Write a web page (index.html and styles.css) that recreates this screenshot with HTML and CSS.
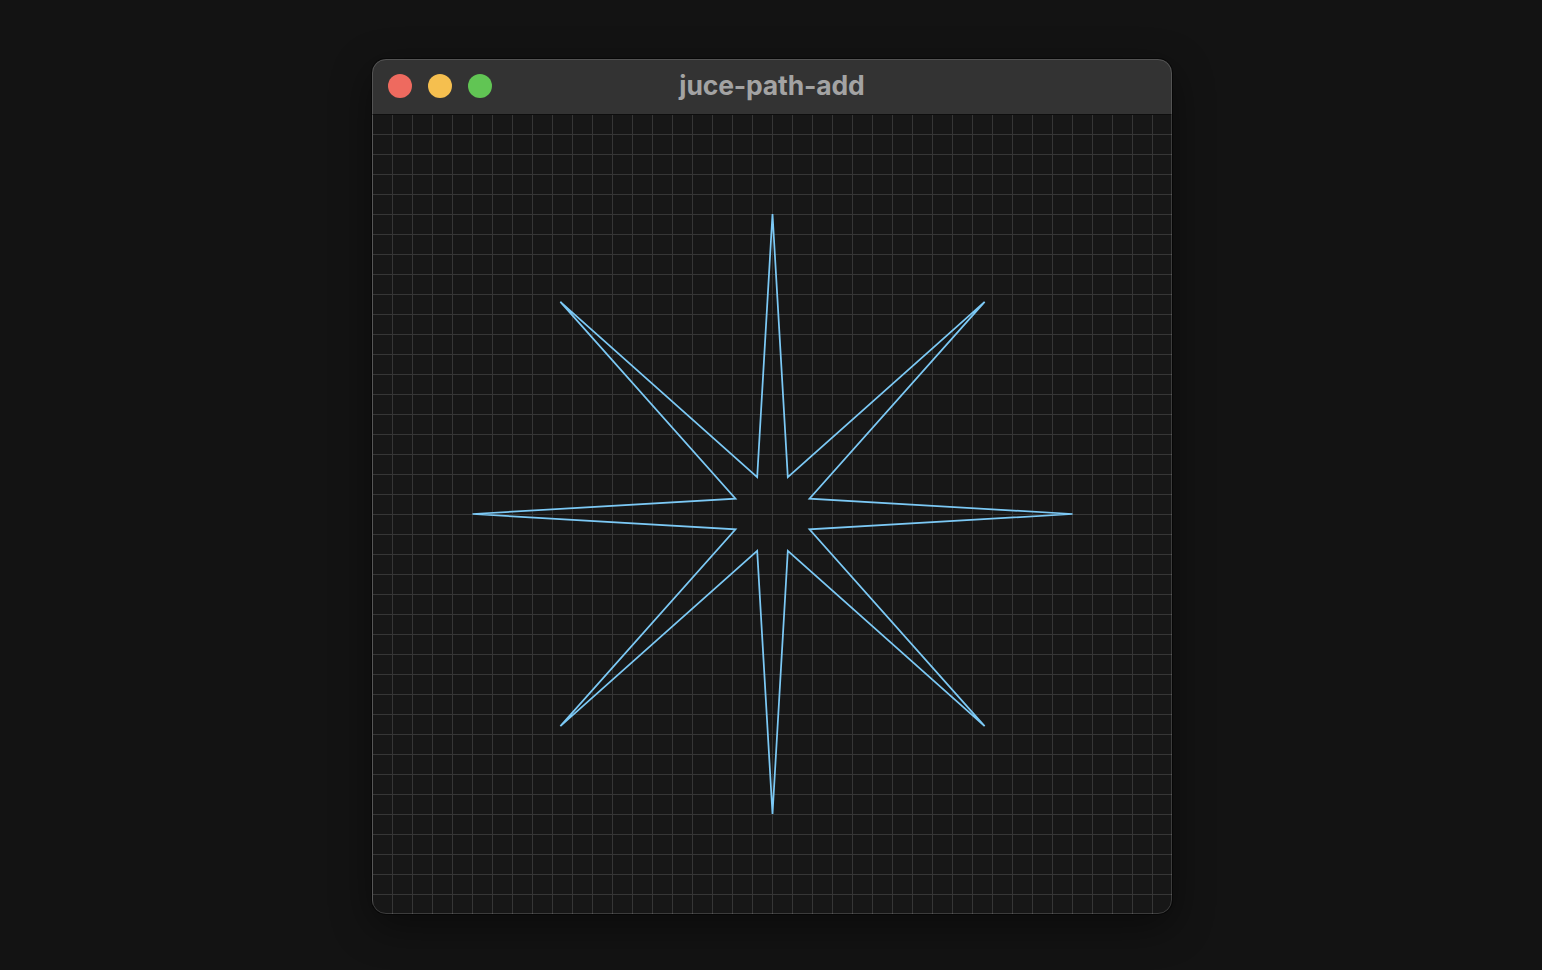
FILE: index.html
```html
<!DOCTYPE html>
<html>
<head>
<meta charset="utf-8">
<title>juce-path-add</title>
<link rel="stylesheet" href="styles.css">
</head>
<body>
<div class="window">
  <div class="titlebar">
    <div class="lights">
      <span class="light red"></span>
      <span class="light yellow"></span>
      <span class="light green"></span>
    </div>
    <div class="title">juce-path-add</div>
  </div>
  <div class="content">
    <svg class="canvas" width="800" height="800" viewBox="0 0 800 800" xmlns="http://www.w3.org/2000/svg">
      <defs>
        <pattern id="grid" width="20" height="20" patternUnits="userSpaceOnUse">
          <rect x="0" y="0" width="1" height="20" fill="#363636"/>
          <rect x="0" y="0" width="20" height="1" fill="#363636"/>
        </pattern>
      </defs>
      <rect x="0" y="0" width="800" height="800" fill="#171717"/>
      <rect x="0" y="0" width="800" height="800" fill="url(#grid)"/>
      <rect x="0" y="0" width="800" height="1" fill="#0e0e0e"/>
      <polygon fill="none" stroke="#7cc9f5" stroke-width="1.75" stroke-linejoin="miter" stroke-miterlimit="4"
        points="400.5,100 415.81,363.04 612.63,187.87 437.46,384.69 700.5,400 437.46,415.31 612.63,612.13 415.81,436.96 400.5,700 385.19,436.96 188.37,612.13 363.54,415.31 100.5,400 363.54,384.69 188.37,187.87 385.19,363.04"/>
    </svg>
  </div>
</div>
</body>
</html>
```

FILE: styles.css
```css
html, body {
  margin: 0;
  padding: 0;
  background: #131313;
  height: 100%;
}

body {
  display: flex;
  justify-content: center;
  align-items: flex-start;
  padding-top: 59px;
  padding-left: 2px;
  box-sizing: border-box;
  font-family: "Inter", "Liberation Sans", sans-serif;
}

.window {
  position: relative;
  width: 800px;
  border-radius: 14px;
  overflow: hidden;
  background: #171717;
  box-shadow: 0 12px 40px rgba(0, 0, 0, 0.45), 0 0 0 1px rgba(0, 0, 0, 0.5);
}

.window::after {
  content: "";
  position: absolute;
  inset: 0;
  border: 1px solid rgba(255, 255, 255, 0.16);
  border-radius: 14px;
  pointer-events: none;
}

.titlebar {
  position: relative;
  height: 55px;
  background: #333333;
  display: flex;
  align-items: center;
  justify-content: center;
}

.lights {
  position: absolute;
  left: 16px;
  top: 15px;
  display: flex;
  gap: 16px;
}

.light {
  width: 24px;
  height: 24px;
  border-radius: 50%;
  display: block;
}

.red { background: #ee6a5f; }
.yellow { background: #f5bf4f; }
.green { background: #61c554; }

.title {
  color: #a3a3a3;
  font-size: 26.5px;
  font-weight: 700;
  letter-spacing: -0.15px;
  margin-top: -3px;
}

.content {
  width: 800px;
  height: 800px;
  display: block;
}

.canvas {
  display: block;
}
```
